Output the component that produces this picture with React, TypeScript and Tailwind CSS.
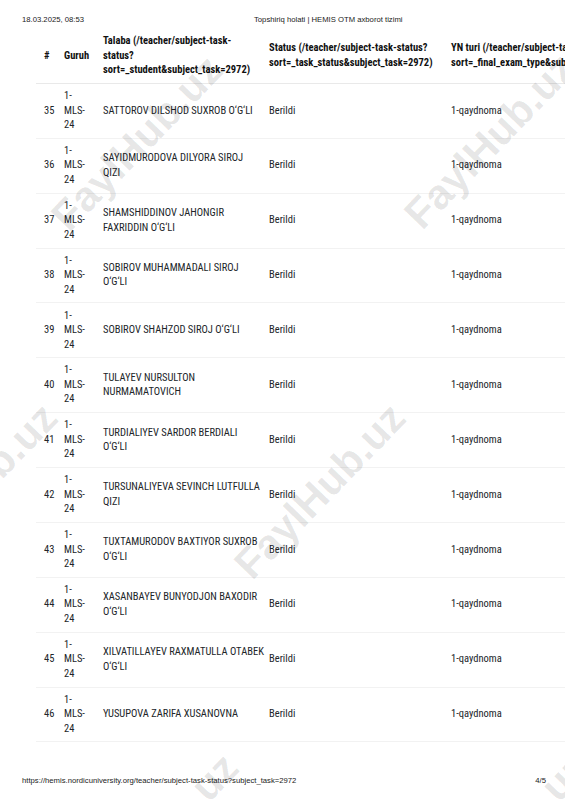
// names split where the printed page wraps them
const students = [
  { id: 35, name: "SATTOROV DILSHOD SUXROB O‘G‘LI" },
  { id: 36, name: "SAYIDMURODOVA DILYORA SIROJ\nQIZI" },
  { id: 37, name: "SHAMSHIDDINOV JAHONGIR\nFAXRIDDIN O‘G‘LI" },
  { id: 38, name: "SOBIROV MUHAMMADALI SIROJ\nO‘G‘LI" },
  { id: 39, name: "SOBIROV SHAHZOD SIROJ O‘G‘LI" },
  { id: 40, name: "TULAYEV NURSULTON\nNURMAMATOVICH" },
  { id: 41, name: "TURDIALIYEV SARDOR BERDIALI\nO‘G‘LI" },
  { id: 42, name: "TURSUNALIYEVA SEVINCH LUTFULLA\nQIZI" },
  { id: 43, name: "TUXTAMURODOV BAXTIYOR SUXROB\nO‘G‘LI" },
  { id: 44, name: "XASANBAYEV BUNYODJON BAXODIR\nO‘G‘LI" },
  { id: 45, name: "XILVATILLAYEV RAXMATULLA OTABEK\nO‘G‘LI" },
  { id: 46, name: "YUSUPOVA ZARIFA XUSANOVNA" },
];

// watermark centres, page coordinates
const marks = [
  "left-[137px] top-[143px]",
  "left-[490px] top-[141px]",
  "left-[-28px] top-[491px]",
  "left-[320px] top-[491px]",
  "left-[153px] top-[841px]",
  "left-[503px] top-[841px]",
];

export default function App() {
  return (
    <div className="relative flex flex-col w-[565px] h-[800px] overflow-hidden bg-white text-[#212529]">
      {/* PRINT HEADER */}
      <div className="flex pl-[22px] pt-[15px] text-[7.7px] leading-[10px] text-[#222] font-['Liberation_Sans',Arial,sans-serif]">
        <span>18.03.2025, 08:53</span>
        <span className="ml-[170px]">Topshiriq holati | HEMIS OTM axborot tizimi</span>
      </div>

      {/* TABLE */}
      <table className="mt-[4px] ml-[36px] table-fixed border-collapse w-[607px] font-['Roboto',sans-serif] [font-stretch:condensed] text-[10.5px] leading-[14.5px]">
        <colgroup>
          <col className="w-[20px]" />
          <col className="w-[40px]" />
          <col className="w-[165px]" />
          <col className="w-[182px]" />
          <col className="w-[200px]" />
        </colgroup>
        <thead>
          <tr className="border-b border-[#e9e9e9] font-bold text-left align-middle text-[#111]">
            <th className="pl-2 pr-[3px] py-[5.2px]">#</th>
            <th className="pl-2 pr-[20px] py-[5.2px]">Guruh</th>
            <th className="pl-[7px] pr-0 py-[5.2px] whitespace-nowrap">
              Talaba (/teacher/subject-task-
              <br />
              status?
              <br />
              sort=_student&amp;subject_task=2972)
            </th>
            <th className="pl-2 pr-[3px] py-[5.2px] whitespace-nowrap">
              Status (/teacher/subject-task-status?
              <br />
              sort=_task_status&amp;subject_task=2972)
            </th>
            <th className="pl-2 pr-[3px] py-[5.2px] whitespace-nowrap">
              YN turi (/teacher/subject-task-status?
              <br />
              sort=_final_exam_type&amp;subject_task=2972)
            </th>
          </tr>
        </thead>
        <tbody>
          {students.map((s) => (
            <tr key={s.id} className="border-b border-[#f2f2f2] align-middle">
              <td className="pl-2 pr-[3px] py-[5.2px]">{s.id}</td>
              {/* narrow box so the group code breaks at each hyphen */}
              <td className="pl-2 pr-[20px] py-[5.2px]">1-MLS-24</td>
              <td className="pl-[7px] pr-0 py-[5.2px] whitespace-pre">{s.name}</td>
              <td className="pl-2 pr-[3px] py-[5.2px]">Berildi</td>
              <td className="pl-2 pr-[3px] py-[5.2px]">1-qaydnoma</td>
            </tr>
          ))}
        </tbody>
      </table>

      {/* PRINT FOOTER */}
      <div className="mt-auto flex justify-between pl-[22px] pr-[19px] pb-[14px] text-[7.7px] leading-[10px] text-[#222] font-['Liberation_Sans',Arial,sans-serif]">
        <span>https://hemis.nordicuniversity.org/teacher/subject-task-status?subject_task=2972</span>
        <span>4/5</span>
      </div>

      {/* WATERMARKS */}
      {marks.map((pos) => (
        <span
          key={pos}
          className={`${pos} pointer-events-none absolute -translate-x-1/2 -translate-y-1/2 -rotate-[46deg] whitespace-nowrap font-['Liberation_Sans',Arial,sans-serif] text-[42px] font-bold leading-none text-black/[0.1]`}
        >
          FaylHub.uz
        </span>
      ))}
    </div>
  );
}
